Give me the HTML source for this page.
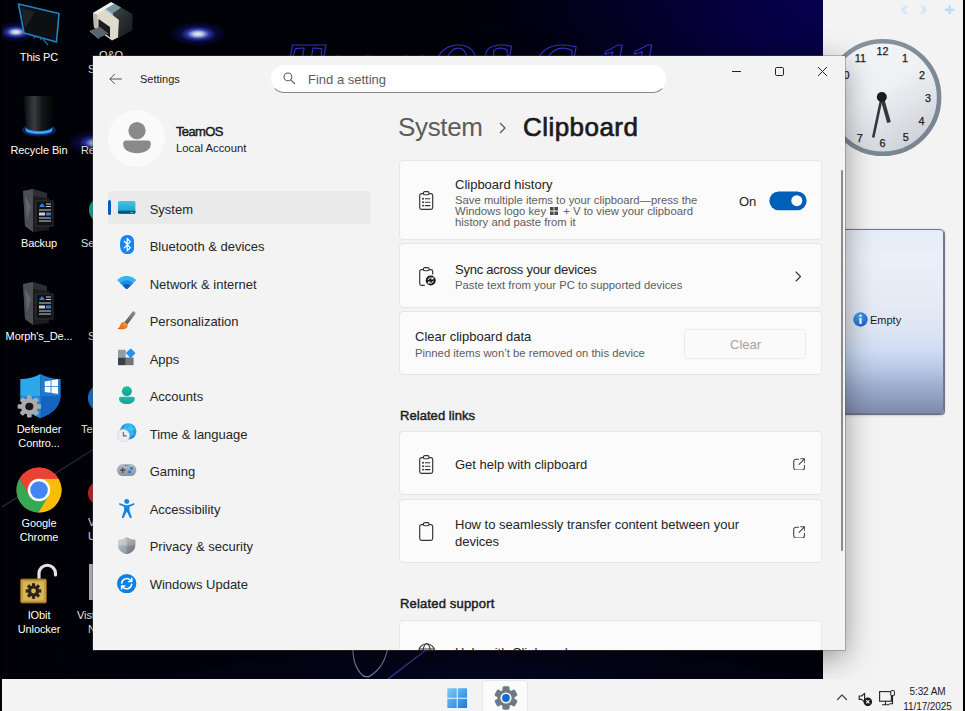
<!DOCTYPE html>
<html lang="en">
<head>
<meta charset="utf-8">
<title>Settings - Clipboard</title>
<style>
*{box-sizing:border-box;margin:0;padding:0}
html,body{width:965px;height:711px;overflow:hidden;background:#000}
body{font-family:"Liberation Sans",sans-serif;position:relative;color:#1b1b1b}
.abs{position:absolute}
/* desktop */
#desk{position:absolute;left:2px;top:0;width:821px;height:679px;overflow:hidden;
 background:
  radial-gradient(ellipse 400px 320px at 840px -20px, #070052 0%, #060046 22%, #04002c 48%, #020014 74%, rgba(1,1,9,0) 100%),
  radial-gradient(ellipse 520px 120px at 480px 679px, #050520 0%, rgba(3,3,20,.6) 60%, rgba(1,1,9,0) 100%),
  #010108;
}
.glow{position:absolute;border-radius:50%;background:radial-gradient(ellipse at center,#f4f6d8 0%,#b9c4e4 12%,#2a36a8 28%,rgba(14,18,96,.55) 45%,rgba(6,8,50,.25) 70%,rgba(0,0,0,0) 100%)}
.dicon{position:absolute;width:78px;text-align:center;color:#fff;font-size:11px;line-height:14px;
 text-shadow:0 1px 2px #000,0 0 3px #000,1px 1px 1px #000;letter-spacing:-.1px}
.dicon svg{display:block;margin:0 auto}
/* sidebar */
#side{position:absolute;left:823px;top:0;width:140px;height:679px;background:#f3f3f3}
/* taskbar */
#task{position:absolute;left:2px;top:679px;width:961px;height:32px;background:#f3f3f3}
/* window */
#win{position:absolute;left:93px;top:56px;width:752px;height:594px;background:#f3f3f3;overflow:hidden;
 box-shadow:0 0 0 1px rgba(90,90,90,.35),0 8px 28px rgba(0,0,0,.4)}
.nav{position:absolute;left:56px;font-size:13px;color:#262626;white-space:nowrap}
.card{position:absolute;left:306px;width:423px;background:#fbfbfb;border:1px solid #e6e6e6;border-radius:4px}
.t13{position:absolute;font-size:13px;color:#242424;white-space:nowrap}
.t11{position:absolute;font-size:11.300px;color:#5d5d5d;white-space:nowrap}
</style>
</head>
<body>
<div id="desk">
<div class="glow" style="left:-8px;top:22px;width:44px;height:20px"></div>
<div class="glow" style="left:168px;top:22px;width:56px;height:24px"></div>
<div class="glow" style="left:66px;top:130px;width:56px;height:26px"></div>
<div class="glow" style="left:190px;top:62px;width:40px;height:16px;opacity:.6"></div>
<div class="abs" id="neon" style="left:284px;top:33px;font-family:'Liberation Serif',serif;font-style:italic;font-weight:bold;font-size:62px;line-height:62px;letter-spacing:2px;color:transparent;-webkit-text-stroke:1.200px #3232d0;white-space:nowrap">TeamOS G 11</div>
<svg class="abs" style="left:0;top:0" width="821" height="679" viewBox="0 0 821 679"><path d="M0 507L92 449" stroke="#2a2a44" stroke-width="1.300" fill="none"/><path d="M351 646C350 666 360 680 368 676 378 670 384 660 386 646" stroke="#7f93bd" stroke-width="1.100" fill="none"/><path d="M386 679l42-32" stroke="#3c38a8" stroke-width="1.300" fill="none"/></svg>
<svg class="abs" style="left:14px;top:2px" width="46" height="44" viewBox="0 0 46 44"><path d="M2.500 2L43 11.500 40.500 40 8 31z" fill="#0e0f12" stroke="#1a86c8" stroke-width="1.600" stroke-linejoin="round"/><path d="M5 6l14 3.500L9 27z" fill="#fff" opacity=".08"/><path d="M18 33.500l1 3M24 35l1 3M27 37l5 6" stroke="#1a6ea8" stroke-width="1.200"/></svg>
<div class="dicon" id="d1" style="left:-2.0px;top:49.5px">This PC</div>
<svg class="abs" style="left:86px;top:0" width="48" height="44" viewBox="0 0 48 44"><defs><linearGradient id="gpg" x1="0" y1="0" x2="1" y2="1"><stop offset="0" stop-color="#4a5a60"/><stop offset=".5" stop-color="#2a3135"/><stop offset="1" stop-color="#15181a"/></linearGradient></defs><polygon points="17.0,9.0 26.0,3.5 44.5,14.0 44.5,30.0 30.0,38.5 31.0,20.0" fill="url(#gpg)" /><polygon points="17.0,9.0 26.0,3.5 33.0,7.5 24.5,13.5" fill="#7b949c" /><polygon points="5.0,13.0 23.0,2.3 26.0,3.8 17.0,9.0 31.0,20.0 30.0,37.5 24.0,40.5 6.0,27.5" fill="#dedacc" /><polygon points="5.0,13.0 23.0,2.3 26.0,3.8 9.0,14.5" fill="#f1eee6" /><polygon points="5.0,13.0 9.0,14.5 10.0,29.5 6.0,27.5" fill="#bdb8a8" /><polygon points="10.5,19.0 22.0,27.0 22.0,37.5 10.5,28.5" fill="#1b1b1d" /><polygon points="2.0,30.5 12.0,27.0 20.5,33.5 11.0,38.0" fill="#59636f" /><polygon points="2.0,30.5 11.0,38.0 11.0,39.2 2.0,31.7" fill="#8b95a2" /><path d="M17.500 9.500l7.500 5" stroke="#a6d4e4" stroke-width="1.200"/></svg>
<div class="dicon" style="left:70px;top:48px;height:8px;overflow:hidden">O&amp;O</div>
<div class="dicon" style="left:86px;top:62px;width:5px;text-align:left;overflow:hidden;white-space:nowrap">S</div>
<svg class="abs" style="left:14px;top:94px" width="48" height="46" viewBox="0 0 48 46"><defs><linearGradient id="gbin" x1="0" y1="0" x2="1" y2="0"><stop offset="0" stop-color="#050506"/><stop offset=".35" stop-color="#3a3d42"/><stop offset=".6" stop-color="#15161a"/><stop offset="1" stop-color="#020203"/></linearGradient></defs><ellipse cx="23" cy="36" rx="17" ry="6.500" fill="#0a2a66" opacity=".8"/><path d="M7 2h32l-3.500 34c-3 3.500-22 3.500-25 0z" fill="url(#gbin)"/><path d="M9.500 33c2 5.500 25 5.500 27 0l-.4 4.200c-3 4-23 4-26.200 0z" fill="#1e90ff"/><path d="M9.800 35.500c3 4 23.500 4 26.400 0" fill="none" stroke="#5cc0ff" stroke-width=".8"/></svg>
<div class="dicon" id="d2" style="left:-2.0px;top:143.0px">Recycle Bin</div>
<div class="dicon" style="left:79px;top:143px;width:12px;text-align:left;overflow:hidden;white-space:nowrap">Re</div>
<svg class="abs" style="left:19px;top:188px" width="36" height="46" viewBox="0 0 36 46"><path d="M2 3l10-2 14 4v36l-14 3L4 38z" fill="#2c2e31"/><path d="M2 3l10-2v43L4 38z" fill="#4a4d51"/><path d="M4 8l6 10-4 14z" fill="#7a7d82" opacity=".5"/><path d="M12 8l16 2v32l-16 2z" fill="#1b1c1e"/><rect x="15" y="13" width="17" height="25" fill="#101114" stroke="#3a3c40" stroke-width=".8"/><path d="M18 19l3-4 3 4z" fill="#2f7fe0"/><path d="M25 16h5M25 18.500h5M18 22h12M18 30h12M18 33h12" stroke="#c9cdd2" stroke-width="1.100"/><rect x="18" y="24.500" width="6" height="3" fill="#c9cdd2"/><rect x="25" y="24.500" width="5" height="3" fill="#2f7fe0"/></svg>
<div class="dicon" id="d3" style="left:-2.0px;top:236.0px">Backup</div>
<div class="dicon" style="left:79px;top:236px;width:12px;text-align:left;overflow:hidden;white-space:nowrap">Se</div>
<div class="abs" style="left:87px;top:197px;width:26px;height:26px;border-radius:50%;background:#19b8b0"></div>
<svg class="abs" style="left:19px;top:281px" width="36" height="46" viewBox="0 0 36 46"><path d="M2 3l10-2 14 4v36l-14 3L4 38z" fill="#2c2e31"/><path d="M2 3l10-2v43L4 38z" fill="#4a4d51"/><path d="M4 8l6 10-4 14z" fill="#7a7d82" opacity=".5"/><path d="M12 8l16 2v32l-16 2z" fill="#1b1c1e"/><rect x="15" y="13" width="17" height="25" fill="#101114" stroke="#3a3c40" stroke-width=".8"/><path d="M18 19l3-4 3 4z" fill="#2f7fe0"/><path d="M25 16h5M25 18.500h5M18 22h12M18 30h12M18 33h12" stroke="#c9cdd2" stroke-width="1.100"/><rect x="18" y="24.500" width="6" height="3" fill="#c9cdd2"/><rect x="25" y="24.500" width="5" height="3" fill="#2f7fe0"/></svg>
<div class="dicon" id="d4" style="left:-2.0px;top:329.3px">Morph's_De...</div>
<div class="dicon" style="left:86px;top:329px;width:5px;text-align:left;overflow:hidden;white-space:nowrap">S</div>
<svg class="abs" style="left:12.500px;top:372px" width="51" height="48" viewBox="0 0 48 48" preserveAspectRatio="none"><path d="M24 2c6 3.500 12 5 19 5v15c0 12-8 20-19 24z" fill="#1e78d6"/><path d="M24 2C18 5.500 12 7 5 7v15c0 12 8 20 19 24z" fill="#2ba7ea"/><path d="M24 24h19c-.6 11-8 18-19 22z" fill="#1565c0"/><path d="M5 24h19v22C13 42 5.600 35 5 24z" fill="#1e88e0"/><path d="M28 9.500l5.500-1v5.800H28zM34.300 8.300l6.200-1.100v7.100h-6.200zM28 15.100h5.500v5.700l-5.500-.9zM34.300 15.100h6.200v7l-6.200-1.100z" fill="#fff"/><g transform="translate(13.500 34.500)"><g fill="#ababab"><circle r="8"/><rect x="-2.200" y="-11" width="4.400" height="22" rx="1"/><rect x="-2.200" y="-11" width="4.400" height="22" rx="1" transform="rotate(45)"/><rect x="-2.200" y="-11" width="4.400" height="22" rx="1" transform="rotate(90)"/><rect x="-2.200" y="-11" width="4.400" height="22" rx="1" transform="rotate(135)"/></g><circle r="3.800" fill="#15181c"/></g></svg>
<div class="dicon" id="d5" style="left:-2.0px;top:422.0px">Defender<br>Contro...</div>
<div class="dicon" style="left:79px;top:422px;width:12px;text-align:left;overflow:hidden;white-space:nowrap">Te</div>
<div class="abs" style="left:86px;top:384px;width:28px;height:28px;border-radius:50%;background:#1e7fe0"></div>
<svg class="abs" style="left:13.500px;top:466.500px" width="46" height="46" viewBox="-23 -23 46 46"><circle r="22.500" fill="#ea4335"/><path d="M0 0L-19.490 -11.250A22.500 22.500 0 0 0 -0.500 22.490L9.740 5.630z" fill="#34a853"/><path d="M0 0L9.740 5.630-0.500 22.490A22.500 22.500 0 0 0 19.490 -11.250L0 -11.250z" fill="#fbbc05"/><path d="M0 -11.250L19.490 -11.250A22.500 22.500 0 0 0 -19.490 -11.250L-9.740 5.630z" fill="#ea4335"/><circle r="11.250" fill="#fff"/><circle r="8.800" fill="#4285f4"/></svg>
<div class="dicon" id="d6" style="left:-2.0px;top:515.5px">Google<br>Chrome</div>
<div class="abs" style="left:86px;top:481px;width:24px;height:24px;border-radius:50%;background:#d8262c"></div>
<div class="dicon" style="left:86px;top:515px;width:5px;text-align:left;overflow:hidden;white-space:nowrap">V</div>
<div class="dicon" style="left:86px;top:529px;width:5px;text-align:left;overflow:hidden;white-space:nowrap">U</div>
<svg class="abs" style="left:16px;top:560px" width="44" height="46" viewBox="0 0 44 46"><path d="M21 20V13.500a8.250 8.250 0 0 1 16.500 0V15" fill="none" stroke="#e2e2e2" stroke-width="3.200" stroke-linecap="round"/><rect x="2.500" y="19" width="26" height="24" rx="1.500" fill="#c49a3c" stroke="#7a5a18" stroke-width="1"/><rect x="5" y="21.500" width="21" height="19" fill="#d8b45a"/><g transform="translate(15.500 31)" fill="#2a2418"><circle r="5.600"/><rect x="-1.600" y="-7.800" width="3.200" height="15.600"/><rect x="-1.600" y="-7.800" width="3.200" height="15.600" transform="rotate(45)"/><rect x="-1.600" y="-7.800" width="3.200" height="15.600" transform="rotate(90)"/><rect x="-1.600" y="-7.800" width="3.200" height="15.600" transform="rotate(135)"/><circle r="2.400" fill="#d8b45a"/></g></svg>
<div class="dicon" id="d7" style="left:-2.0px;top:608.0px">IObit<br>Unlocker</div>
<div class="dicon" style="left:75px;top:608px;width:16px;text-align:left;overflow:hidden;white-space:nowrap">Vist</div>
<div class="dicon" style="left:86px;top:622px;width:5px;text-align:left;overflow:hidden;white-space:nowrap">N</div>
<div class="abs" style="left:87px;top:564px;width:20px;height:36px;background:#c8ccd2"></div>
</div>
<div id="side">
  <svg class="abs" style="left:0;top:0" width="140" height="230" viewBox="0 0 140 230">
    <defs>
      <linearGradient id="cface" x1="0.2" y1="0" x2="0.8" y2="1"><stop offset="0" stop-color="#f4f6f8"/><stop offset=".45" stop-color="#eef0f3"/><stop offset="1" stop-color="#c9ced4"/></linearGradient>
      <linearGradient id="cring" x1="0" y1="0" x2="1" y2="1"><stop offset="0" stop-color="#8a96a2"/><stop offset="1" stop-color="#76828e"/></linearGradient>
      <filter id="hb" x="-50%" y="-50%" width="200%" height="200%"><feGaussianBlur stdDeviation=".5"/></filter>
    </defs>
    <g fill="#d6e7f7"><path d="M81.400 5.400l-3.600 4.300 3.600 4.300h3.600l-2.800-4.300 2.800-4.300z"/><path d="M100.600 5.400l3.600 4.300-3.600 4.300h-3.600l2.800-4.300-2.800-4.300z"/></g>
    <path d="M125.300 5.400h2.600v3h3.200v2.600h-3.200v3h-2.600v-3h-3.200v-2.600h3.200z" fill="#bddcf6"/>
    <circle cx="59.800" cy="97.500" r="56.300" fill="url(#cface)" stroke="url(#cring)" stroke-width="4.600"/>
    <g font-family="Liberation Sans, sans-serif" font-size="10.800" fill="#1a1a1a" stroke="#1a1a1a" stroke-width=".25" transform="translate(0 .5)"><text x="59.6" y="54.4" text-anchor="middle">12</text><text x="82.0" y="61.1" text-anchor="middle">1</text><text x="99.0" y="78.0" text-anchor="middle">2</text><text x="105.0" y="101.0" text-anchor="middle">3</text><text x="98.6" y="124.2" text-anchor="middle">4</text><text x="82.8" y="140.4" text-anchor="middle">5</text><text x="59.6" y="146.6" text-anchor="middle">6</text><text x="36.7" y="141.1" text-anchor="middle">7</text><text x="37.3" y="61.2" text-anchor="middle">11</text><text x="20.5" y="78.6" text-anchor="middle">10</text></g>
    <g filter="url(#hb)"><path d="M58.8 97L66.0 122.600" stroke="#33383e" stroke-width="3.800" stroke-linecap="butt"/>
    <path d="M58.8 97L50.2 137.600" stroke="#33383e" stroke-width="2.600" stroke-linecap="butt"/></g>
    <circle cx="58.8" cy="97" r="5" fill="#1b1b1b"/>
  </svg>
  <div class="abs" style="left:8px;top:229px;width:113px;height:185px;border:1px solid #6f7a8c;border-radius:4px;
    background:linear-gradient(180deg,#e6ecf7 0%,#eaf0f9 15%,#e5eaf5 40%,#dde5f3 55%,#cedcf4 66%,#b7c7e5 76%,#9aa8c9 87%,#7e8bad 100%);box-shadow:1px 1px 0 rgba(70,78,100,.7),0 1px 3px rgba(0,0,0,.3)"></div>
  <svg class="abs" style="left:30px;top:312px" width="15" height="15" viewBox="0 0 15 15"><defs><radialGradient id="ginfo" cx=".4" cy=".3" r=".8"><stop offset="0" stop-color="#4aa8f0"/><stop offset="1" stop-color="#0b5fc0"/></radialGradient></defs><circle cx="7.500" cy="7.500" r="7.200" fill="url(#ginfo)"/><circle cx="7.500" cy="3.800" r="1.200" fill="#fff"/><rect x="6.400" y="5.900" width="2.200" height="6" rx=".4" fill="#fff"/></svg>
  <div class="abs" id="empty" style="left:47px;top:313px;font-size:11px;line-height:14px;color:#1b1b1b">Empty</div>
</div>

<div id="win">
  <!-- title bar -->
  <svg class="abs" style="left:16px;top:17px" width="13" height="12" viewBox="0 0 13 12"><path d="M12.5 6H1M5.6 1.2L.9 6l4.7 4.8" fill="none" stroke="#555" stroke-width="1" stroke-linecap="round" stroke-linejoin="round"/></svg>
  <div class="abs" id="ttl" style="left:47px;top:16px;font-size:11px;line-height:14px;color:#1b1b1b">Settings</div>
  <div class="abs" style="left:177px;top:8px;width:397px;height:29px;border-radius:14.500px;background:#fff;border:1px solid #f4f4f4;border-bottom-color:#868686"></div>
  <svg class="abs" style="left:189.600px;top:16px" width="13" height="13" viewBox="0 0 13 13"><circle cx="4.900" cy="4.900" r="3.900" fill="none" stroke="#555" stroke-width="1.050"/><path d="M7.800 7.800l3.900 3.900" stroke="#555" stroke-width="1.150" stroke-linecap="round"/></svg>
  <div class="abs" id="find" style="left:215px;top:15.800px;font-size:13px;line-height:16px;color:#5c5c5c">Find a setting</div>
  <svg class="abs" style="left:638px;top:9.500px" width="100" height="12" viewBox="0 0 100 12">
    <path d="M1 5.5h9" stroke="#222" stroke-width="1"/>
    <rect x="44.5" y="1.5" width="8" height="8" rx="1.2" fill="none" stroke="#222" stroke-width="1"/>
    <path d="M87 1l9 9M96 1l-9 9" stroke="#222" stroke-width="1"/>
  </svg>
  <!-- account -->
  <div class="abs" style="left:15px;top:54px;width:57px;height:57px;border-radius:50%;background:#fafafa"></div>
  <svg class="abs" style="left:28.500px;top:65px" width="30" height="36" viewBox="0 0 30 36"><circle cx="15" cy="9.700" r="8.600" fill="#8a8a8a"/><path d="M4.200 19.600h21.600a3 3 0 0 1 3 3v1c0 5.200-6 8.600-13.800 8.600S1.200 28.800 1.200 23.600v-1a3 3 0 0 1 3-3z" fill="#8a8a8a"/></svg>
  <div class="abs" id="uname" style="left:83px;top:67.500px;font-size:13px;line-height:16px;-webkit-text-stroke:.45px #1b1b1b;color:#1b1b1b;letter-spacing:-.65px">TeamOS</div>
  <div class="abs" id="uacc" style="left:83px;top:85px;font-size:11.300px;line-height:14px;color:#1b1b1b">Local Account</div>
  <!-- nav -->
  <div class="abs" style="left:15px;top:135px;width:263px;height:33px;border-radius:4px;background:#eaeaea"></div>
  <div class="abs" style="left:15px;top:144px;width:3px;height:15px;border-radius:2px;background:#005fb8"></div>
  <div class="nav" id="n0" style="top:145.5px;left:56.7px;line-height:16px">System</div>
  <div class="nav" id="n1" style="top:183.0px;left:56.7px;line-height:16px">Bluetooth &amp; devices</div>
  <div class="nav" id="n2" style="top:220.5px;left:56.7px;line-height:16px">Network &amp; internet</div>
  <div class="nav" id="n3" style="top:258.0px;left:56.7px;line-height:16px">Personalization</div>
  <div class="nav" id="n4" style="top:295.5px;left:56.7px;line-height:16px">Apps</div>
  <div class="nav" id="n5" style="top:333.0px;left:56.7px;line-height:16px">Accounts</div>
  <div class="nav" id="n6" style="top:370.5px;left:56.7px;line-height:16px">Time &amp; language</div>
  <div class="nav" id="n7" style="top:408.0px;left:56.7px;line-height:16px">Gaming</div>
  <div class="nav" id="n8" style="top:445.5px;left:56.7px;line-height:16px">Accessibility</div>
  <div class="nav" id="n9" style="top:483.0px;left:56.7px;line-height:16px">Privacy &amp; security</div>
  <div class="nav" id="n10" style="top:520.5px;left:56.7px;line-height:16px">Windows Update</div>
  
  <!-- heading -->
  <div class="abs" id="h1a" style="left:305px;top:55px;letter-spacing:-.35px;font-size:26px;line-height:32px;color:#5c5c5c;white-space:nowrap">System</div>
  <svg class="abs" style="left:406px;top:66px" width="8" height="12" viewBox="0 0 8 12"><path d="M1.5 1.5L6 6l-4.500 4.500" fill="none" stroke="#5c5c5c" stroke-width="1.4" stroke-linecap="round" stroke-linejoin="round"/></svg>
  <div class="abs" id="h1b" style="left:430px;top:55px;letter-spacing:.45px;font-size:26px;line-height:32px;color:#1b1b1b;-webkit-text-stroke:.7px #1b1b1b;white-space:nowrap">Clipboard</div>
  <!-- cards -->
  <div class="card" style="top:104px;height:80px"></div>
  <div class="card" style="top:187px;height:65px"></div>
  <div class="card" style="top:255px;height:64px"></div>
  <div class="card" style="top:375px;height:64px"></div>
  <div class="card" style="top:443px;height:64px"></div>
  <div class="card" style="top:564px;height:64px"></div>
  <!-- card 1 -->
  <div class="t13" id="c1t" style="left:362px;top:121px">Clipboard history</div>
  <div class="t11" id="c1a" style="left:362px;top:139px;line-height:11px">Save multiple items to your clipboard—press the</div>
  <div class="t11" id="c1b" style="left:362px;top:150px;line-height:11px">Windows logo key <svg width="8" height="8" viewBox="0 0 8 8" style="vertical-align:0;margin:0 2px 0 1px"><path d="M0 0h3.600v3.600H0zM4.400 0h3.600v3.600H4.400zM0 4.400h3.600v3.600H0zM4.400 4.400h3.600v3.600H4.400z" fill="#4a4a4a"/></svg> + V to view your clipboard</div>
  <div class="t11" id="c1c" style="left:362px;top:161px;line-height:11px">history and paste from it</div>
  <div class="t13" id="on" style="left:646px;top:138px">On</div>
  <svg class="abs" style="left:675px;top:134px" width="40" height="22" viewBox="0 0 40 22"><rect x="1.300" y="1.400" width="37.400" height="18.800" rx="9.400" fill="#005fb8"/><circle cx="28.800" cy="10.700" r="5.500" fill="#fff"/></svg>
  
  <!-- card 2 -->
  <div class="t13" id="c2t" style="letter-spacing:-.25px;left:362px;top:205.5px">Sync across your devices</div>
  <div class="t11" id="c2a" style="left:362px;top:223px">Paste text from your PC to supported devices</div>
  <svg class="abs" style="left:702.400px;top:214.500px" width="7" height="11" viewBox="0 0 7 11"><path d="M1 1l4.500 4.500L1 10" fill="none" stroke="#333" stroke-width="1.1" stroke-linecap="round" stroke-linejoin="round"/></svg>
  <!-- card 3 -->
  <div class="t13" id="c3t" style="left:322px;top:273px">Clear clipboard data</div>
  <div class="t11" id="c3a" style="left:322px;top:291px">Pinned items won’t be removed on this device</div>
  <div class="abs" style="left:591px;top:273px;width:122px;height:30px;border:1px solid #ebebeb;border-radius:4px;background:#fafafa"></div>
  <div class="t13" id="clr" style="left:637px;top:280.5px;color:#a3a3a3">Clear</div>
  <!-- related links -->
  <div class="t13" id="rl" style="left:307px;top:352px;-webkit-text-stroke:.45px #1b1b1b;letter-spacing:.05px">Related links</div>
  <div class="t13" id="c4t" style="left:362px;top:401px">Get help with clipboard</div>
  <div class="t13" id="c5a" style="left:362px;top:461px">How to seamlessly transfer content between your</div>
  <div class="t13" id="c5b" style="left:362px;top:478px">devices</div>
  <div class="t13" id="rs" style="left:307px;top:540px;-webkit-text-stroke:.45px #1b1b1b;letter-spacing:.18px">Related support</div>
  <div class="t13" id="c6t" style="left:362px;top:589px">Help with Clipboard</div>
  <svg width="0" height="0" style="position:absolute"><defs>
<linearGradient id="gsys" x1="0" y1="0" x2="0" y2="1"><stop offset="0" stop-color="#3ccae2"/><stop offset="1" stop-color="#1a96cc"/></linearGradient>
<linearGradient id="gacc" x1="0" y1="0" x2="0" y2="1"><stop offset="0" stop-color="#22bfa4"/><stop offset="1" stop-color="#0f9f96"/></linearGradient>
<linearGradient id="ggm" x1="0" y1="0" x2="0" y2="1"><stop offset="0" stop-color="#b4bcc5"/><stop offset="1" stop-color="#8a939d"/></linearGradient>
<linearGradient id="gsh" x1="0" y1="0" x2="1" y2="1"><stop offset="0" stop-color="#c5cad0"/><stop offset="1" stop-color="#7b838c"/></linearGradient>
<radialGradient id="gglobe" cx=".6" cy=".3" r=".8"><stop offset="0" stop-color="#35c4f0"/><stop offset="1" stop-color="#0a6fcf"/></radialGradient>
<linearGradient id="gbr" x1="1" y1="0" x2="0" y2="1"><stop offset="0" stop-color="#8a929b"/><stop offset="1" stop-color="#4d555e"/></linearGradient>
<linearGradient id="gor" x1="1" y1="0" x2="0" y2="1"><stop offset="0" stop-color="#f7a13a"/><stop offset="1" stop-color="#ea5a0c"/></linearGradient>
</defs></svg>
  <svg class="abs" style="left:25.2px;top:145.0px" width="17.4" height="12.8" viewBox="0 0 17.4 12.8" ><rect width="17.4" height="12.8" rx="1.6" fill="url(#gsys)"/><path d="M0 9.800h17.400v1.400a1.600 1.600 0 0 1-1.600 1.600h-14.200a1.600 1.600 0 0 1-1.600-1.600z" fill="#0c4f88"/><rect x="12.300" y="10.900" width="3" height=".8" fill="#7fd0f0"/></svg>
  <svg class="abs" style="left:26.6px;top:179.2px" width="14.6" height="19.2" viewBox="0 0 14.6 19.2" ><path d="M7.300 0C12.300 0 14.600 3.400 14.600 9.600S12.300 19.200 7.300 19.200 0 15.800 0 9.600 2.300 0 7.300 0z" fill="#1587ee"/><path d="M4.300 6.300l6 6.300-3.100 3.100V3.500l3.100 3.100-6 6.300" fill="none" stroke="#fff" stroke-width="1.250" stroke-linejoin="round" stroke-linecap="round"/></svg>
  <svg class="abs" style="left:24.2px;top:219.8px" width="19.4" height="13.4" viewBox="0 0 19.4 13.4" ><path d="M9.700 13.400L0 3.900A13.800 13.800 0 0 1 19.400 3.900z" fill="#36b4f3"/><path d="M9.700 13.400L3 6.900A9.500 9.500 0 0 1 16.400 6.900z" fill="#1a8be0"/><path d="M9.700 13.400L5.800 9.700A5.500 5.500 0 0 1 13.600 9.700z" fill="#0c5cb4"/></svg>
  <svg class="abs" style="left:24.4px;top:254.8px" width="19.4" height="18.8" viewBox="0 0 19.4 18.8" ><path d="M17.200.4c1 .5 1.600 1.700 1.100 2.700L10.500 13.600 7.300 11.200 15.400.900c.4-.6 1.200-.8 1.800-.5z" fill="url(#gbr)"/><path d="M7.400 10.800l3.300 2.600c.6 2.300-1 4.200-3.400 4.700-2.200.5-5 .2-7-.4 1.900-.7 2.400-1.700 2.900-3.400.6-2.100 2.100-3.600 4.200-3.500z" fill="url(#gor)"/></svg>
  <svg class="abs" style="left:25.2px;top:292.2px" width="17.6" height="17.4" viewBox="0 0 17.6 17.4" ><rect x="0" y="1.800" width="7.800" height="7.700" fill="#959ca4"/><rect x="0" y="9.500" width="7.800" height="7.700" fill="#3a4047"/><rect x="7.800" y="9.500" width="7.800" height="7.700" fill="#6e757d"/><rect x="9.200" y="1.700" width="7" height="7" rx=".6" transform="rotate(45 12.700 5.200)" fill="#1c93f3"/></svg>
  <svg class="abs" style="left:26.2px;top:329.8px" width="15.8" height="18" viewBox="0 0 15.8 18" ><circle cx="7.900" cy="5.200" r="5" fill="url(#gacc)"/><path d="M1.800 10.700h12.200a1.800 1.800 0 0 1 1.800 1.800c0 3.600-3.400 5.500-7.900 5.500S0 16.100 0 12.500a1.800 1.800 0 0 1 1.800-1.800z" fill="url(#gacc)"/></svg>
  <svg class="abs" style="left:24.4px;top:367.2px" width="19.4" height="19.4" viewBox="0 0 19.4 19.4" ><circle cx="11.200" cy="8.400" r="8.200" fill="url(#gglobe)"/><path d="M11.200.2c-5 3-5 13.400 0 16.400M11.200.2c5 3 5 13.400 0 16.400M3.200 6h16M3.400 11.200h15.600" fill="none" stroke="#7fdcff" stroke-width=".7" opacity=".7"/><circle cx="6.400" cy="12.600" r="6.200" fill="#eceef1" stroke="#c9ced4" stroke-width=".6"/><path d="M6.400 9.400v3.500h2.800" fill="none" stroke="#5a626b" stroke-width="1.100" stroke-linecap="round" stroke-linejoin="round"/></svg>
  <svg class="abs" style="left:24.4px;top:407.6px" width="19.4" height="12.2" viewBox="0 0 19.4 12.2" ><rect width="19.400" height="12.200" rx="6.100" fill="url(#ggm)"/><path d="M3.600 6.200h4.400M5.800 4v4.400" stroke="#39414a" stroke-width="1.200" stroke-linecap="round"/><circle cx="14.600" cy="4.400" r="1.400" fill="#1a73e8"/><circle cx="12.600" cy="8" r="1.400" fill="#1a73e8"/><circle cx="8.600" cy="1.600" r=".5" fill="#39414a"/><circle cx="10.800" cy="1.600" r=".5" fill="#39414a"/></svg>
  <svg class="abs" style="left:26.2px;top:442.8px" width="15.6" height="19.4" viewBox="0 0 15.6 19.4" ><circle cx="7.800" cy="2.600" r="2.500" fill="#1283e6"/><path d="M.9 4.200c-.9-.3-1.200 1.100-.4 1.500l4.600 2.100v3.600l-2.200 6.500c-.4 1.200 1.300 1.900 1.900.7l3-6.100 3 6.100c.6 1.200 2.300.5 1.900-.7l-2.200-6.500V7.800l4.600-2.100c.8-.4.500-1.800-.4-1.500L9.900 5.900c-1.400.5-2.800.5-4.200 0z" fill="#1283e6"/></svg>
  <svg class="abs" style="left:25.2px;top:480.6px" width="17.4" height="17.4" viewBox="0 0 17.4 17.4" ><path d="M8.700 0c2.600 1.700 5.300 2.500 8.200 2.600.3 0 .5.200.5.500v4.700c0 4.700-3 8-8.400 9.500-.2.100-.4.100-.6 0C3 15.800 0 12.500 0 7.800V3.100c0-.3.200-.5.500-.5C3.400 2.500 6.100 1.700 8.700 0z" fill="url(#gsh)"/><path d="M8.700 0v8.600H0V3.100c0-.3.200-.5.500-.5C3.400 2.500 6.100 1.700 8.700 0z" fill="#fff" opacity=".25"/><path d="M8.700 8.600h8.700c-.3 4.300-3.300 7.300-8.700 8.800z" fill="#000" opacity=".12"/></svg>
  <svg class="abs" style="left:24.3px;top:517.5px" width="19.4" height="19.4" viewBox="0 0 19.4 19.4" ><circle cx="9.700" cy="9.700" r="9.700" fill="#0f80e3"/><path d="M4.700 9.200a5.100 5.100 0 0 1 8.800-3l.9.900M14.700 10.200a5.100 5.100 0 0 1-8.800 3l-.9-.9" fill="none" stroke="#fff" stroke-width="1.500" stroke-linecap="round"/><path d="M14.800 4.300v3.200h-3.200M4.600 15.100v-3.200h3.200" fill="none" stroke="#fff" stroke-width="1.500" stroke-linecap="round" stroke-linejoin="round"/></svg>
  <svg class="abs" style="left:326.3px;top:135.4px" width="14.4" height="19.2" viewBox="0 0 14.4 19.2" ><path d="M4.300 2.600H2.600A1.900 1.900 0 0 0 .700 4.500v12a1.900 1.900 0 0 0 1.900 1.900h9.200a1.900 1.900 0 0 0 1.900-1.900v-12a1.900 1.900 0 0 0-1.900-1.900h-1.700" fill="none" stroke="#333" stroke-width="1.150"/><rect x="4.300" y=".7" width="5.800" height="3.100" rx="1.500" fill="none" stroke="#333" stroke-width="1.150"/><g fill="#222"><circle cx="4" cy="7.800" r=".95"/><circle cx="4" cy="11.200" r=".95"/><circle cx="4" cy="14.600" r=".95"/></g><path d="M6.300 7.800h4.600M6.300 11.200h4.600M6.300 14.600h4.600" stroke="#333" stroke-width="1.100" stroke-linecap="round"/></svg>
  <svg class="abs" style="left:326.3px;top:398.8px" width="14.4" height="19.2" viewBox="0 0 14.4 19.2" ><path d="M4.300 2.600H2.600A1.900 1.900 0 0 0 .700 4.500v12a1.900 1.900 0 0 0 1.900 1.900h9.200a1.900 1.900 0 0 0 1.900-1.900v-12a1.900 1.900 0 0 0-1.900-1.900h-1.700" fill="none" stroke="#333" stroke-width="1.150"/><rect x="4.300" y=".7" width="5.800" height="3.100" rx="1.500" fill="none" stroke="#333" stroke-width="1.150"/><g fill="#222"><circle cx="4" cy="7.800" r=".95"/><circle cx="4" cy="11.200" r=".95"/><circle cx="4" cy="14.600" r=".95"/></g><path d="M6.300 7.800h4.600M6.300 11.200h4.600M6.300 14.600h4.600" stroke="#333" stroke-width="1.100" stroke-linecap="round"/></svg>
  <svg class="abs" style="left:326.3px;top:466.3px" width="14.4" height="19.2" viewBox="0 0 14.4 19.2" ><path d="M4.300 2.600H2.600A1.900 1.900 0 0 0 .700 4.500v12a1.900 1.900 0 0 0 1.900 1.900h9.200a1.900 1.900 0 0 0 1.900-1.900v-12a1.900 1.900 0 0 0-1.900-1.900h-1.700" fill="none" stroke="#333" stroke-width="1.150"/><rect x="4.300" y=".7" width="5.800" height="3.100" rx="1.500" fill="none" stroke="#333" stroke-width="1.150"/></svg>
  <svg class="abs" style="left:326.3px;top:210.9px" width="17" height="19.4" viewBox="0 0 17 19.4" ><path d="M4.300 2.600H2.600A1.900 1.900 0 0 0 .700 4.500v12a1.900 1.900 0 0 0 1.900 1.900h3.200M13.700 7.400V4.500a1.900 1.900 0 0 0-1.900-1.900h-1.700" fill="none" stroke="#333" stroke-width="1.150"/><rect x="4.300" y=".7" width="5.800" height="3.100" rx="1.500" fill="none" stroke="#333" stroke-width="1.150"/><circle cx="11.700" cy="13.500" r="5" fill="#1a1a1a"/><path d="M9.200 12.700a2.700 2.700 0 0 1 4.600-1M14.200 14.300a2.700 2.700 0 0 1-4.600 1" fill="none" stroke="#fff" stroke-width="1" stroke-linecap="round"/><path d="M14.100 10.300v1.700h-1.700M9.300 16.700V15h1.700" fill="none" stroke="#fff" stroke-width=".9" stroke-linecap="round" stroke-linejoin="round"/></svg>
  <svg class="abs" style="left:699.6px;top:401.7px" width="12.6" height="12.8" viewBox="0 0 12.6 12.8" ><path d="M5.600 1.200H3.200A2.400 2.400 0 0 0 .700 3.600v6a2.400 2.400 0 0 0 2.400 2.400h6a2.400 2.400 0 0 0 2.400-2.400V7.400" fill="none" stroke="#444" stroke-width="1.100" stroke-linecap="round"/><path d="M7.700.700h4.100v4.100M11.600.900L6.100 6.400" fill="none" stroke="#444" stroke-width="1.100" stroke-linecap="round" stroke-linejoin="round"/></svg>
  <svg class="abs" style="left:699.6px;top:469.6px" width="12.6" height="12.8" viewBox="0 0 12.6 12.8" ><path d="M5.600 1.200H3.200A2.400 2.400 0 0 0 .700 3.600v6a2.400 2.400 0 0 0 2.400 2.400h6a2.400 2.400 0 0 0 2.400-2.400V7.400" fill="none" stroke="#444" stroke-width="1.100" stroke-linecap="round"/><path d="M7.700.700h4.100v4.100M11.600.900L6.100 6.400" fill="none" stroke="#444" stroke-width="1.100" stroke-linecap="round" stroke-linejoin="round"/></svg>
  <svg class="abs" style="left:325.3px;top:586.8px" width="17.4" height="17.4" viewBox="0 0 17.4 17.4" ><circle cx="8.700" cy="8.700" r="8" fill="none" stroke="#333" stroke-width="1.100"/><ellipse cx="8.700" cy="8.700" rx="3.600" ry="8" fill="none" stroke="#333" stroke-width="1.100"/><path d="M1 6h15.400M1 11.400h15.400" stroke="#333" stroke-width="1.100"/></svg>
  
  <!-- scrollbar -->
  <div class="abs" style="left:748px;top:114px;width:2px;height:381px;background:#8a8a8a;border-radius:1px"></div>
</div>

<div id="task">
  <svg class="abs" style="left:445px;top:9px" width="21" height="21" viewBox="0 0 21 21"><defs><linearGradient id="gw" x1="0" y1="0" x2="1" y2="1"><stop offset="0" stop-color="#7ccdf8"/><stop offset="1" stop-color="#1a78dc"/></linearGradient></defs><path d="M.300 1.300a1 1 0 0 1 1-1h8.400v9.400H.300zM10.700.300h8.400a1 1 0 0 1 1 1v8.400h-9.400zM.300 10.700h9.400v9.400H1.300a1 1 0 0 1-1-1zM10.700 10.700h9.400v8.400a1 1 0 0 1-1 1h-8.400z" fill="url(#gw)"/></svg>
  <div class="abs" style="left:480px;top:1px;width:46px;height:35px;border-radius:4px;background:#fbfbfb;border:1px solid #e6e6e6"></div>
  <svg class="abs" style="left:490.600px;top:6.300px" width="26" height="26" viewBox="-13 -13 26 26"><g fill="#6f7a86">
    <circle r="8.600"/>
    <g id="tooth"><rect x="-3.600" y="-11.700" width="7.200" height="6" rx="1.800"/></g>
    <use href="#tooth" transform="rotate(60)"/><use href="#tooth" transform="rotate(120)"/><use href="#tooth" transform="rotate(180)"/><use href="#tooth" transform="rotate(240)"/><use href="#tooth" transform="rotate(300)"/></g>
    <circle r="5.600" fill="#f4f6f8"/><circle r="3.900" fill="#0f6fd0"/></svg>
  <svg class="abs" style="left:834px;top:14px" width="12" height="8" viewBox="0 0 12 8"><path d="M1.500 6.500L6 2l4.500 4.500" fill="none" stroke="#444" stroke-width="1.200" stroke-linecap="round" stroke-linejoin="round"/></svg>
  <svg class="abs" style="left:856px;top:11px" width="16" height="16" viewBox="0 0 16 16"><path d="M1.200 6h2.400L6.600 3.300v8.600L3.600 9.400H1.200z" fill="none" stroke="#222" stroke-width="1.100" stroke-linejoin="round"/><circle cx="9.800" cy="11.800" r="4.300" fill="#1a1a1a"/><path d="M8.200 10.200l3.200 3.200M11.400 10.200l-3.200 3.200" stroke="#fff" stroke-width="1.100"/></svg>
  <svg class="abs" style="left:877.300px;top:11.300px" width="17" height="17" viewBox="0 0 17 17"><rect x=".600" y="1.600" width="11.800" height="9.600" fill="none" stroke="#222" stroke-width="1.100"/><path d="M6.500 11.200v3.300M3 14.800h7.500M13.500 5.500v8.300h-3" fill="none" stroke="#222" stroke-width="1.100"/><rect x="11.800" y=".600" width="3.600" height="5" rx=".6" fill="#f3f3f3" stroke="#222" stroke-width="1"/></svg>
  <div class="abs" id="clk1" style="left:889.500px;top:6.500px;width:72px;text-align:center;font-size:10px;line-height:12px;color:#1b1b1b;letter-spacing:-.1px">5:32 AM</div>
  <div class="abs" id="clk2" style="left:889.500px;top:22px;width:72px;text-align:center;font-size:10px;line-height:12px;color:#1b1b1b;letter-spacing:-.08px">11/17/2025</div>
</div>
</body>
</html>
